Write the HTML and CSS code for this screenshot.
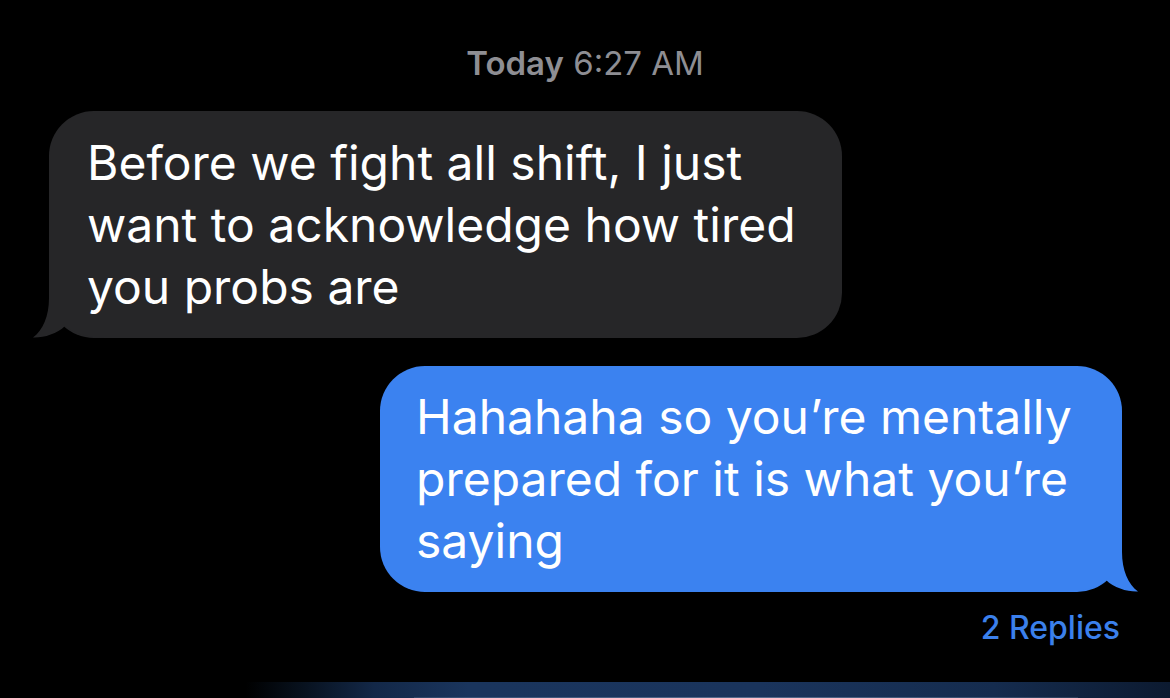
FILE: index.html
```html
<!DOCTYPE html>
<html lang="en">
<head>
  <meta charset="UTF-8" />
  <title>Messages</title>
  <link rel="stylesheet" href="styles.css">
</head>
<body>
  <div class="thread">
    <div class="stamp"><b>Today</b> 6:27 AM</div>

    <div class="row incoming">
      <div class="bubble gray">
        <svg class="tail" viewBox="0 0 80 60" width="80" height="60">
          <path d="M20 0 L20 20 C20 38 14 52 4 59.5 C14 60 28 56 36 48 C44 54 56 60 80 60 L80 0 Z" />
        </svg>
        <span class="text">Before we fight all shift, I just<br>want to acknowledge how tired<br>you probs are</span>
      </div>
    </div>

    <div class="row outgoing">
      <div class="bubble blue">
        <svg class="tail" viewBox="0 0 80 60" width="80" height="60">
          <path d="M20 0 L20 20 C20 38 14 52 4 59.5 C14 60 28 56 36 48 C44 54 56 60 80 60 L80 0 Z" />
        </svg>
        <span class="text">Hahahaha so you’re mentally<br>prepared for it is what you’re<br>saying</span>
      </div>
    </div>

    <div class="replies">2 Replies</div>
  </div>

  <div class="input-glow"></div>
</body>
</html>
```

FILE: styles.css
```css
* {
  box-sizing: border-box;
}

body {
  margin: 0;
  height: 100vh;
  background-color: #000;
  font-family: "Inter", "Noto Sans", sans-serif;
  display: flex;
  flex-direction: column;
  overflow: hidden;
}

.thread {
  display: flex;
  flex-direction: column;
  padding-top: 42px;
}

.stamp {
  text-align: center;
  color: #8e8e93;
  font-size: 33px;
  line-height: 42px;
  margin-bottom: 27px;
}

.stamp b {
  font-weight: 600;
}

.row {
  display: flex;
}

.row.incoming {
  padding-left: 49px;
}

.row.outgoing {
  justify-content: flex-end;
  padding-right: 48px;
  margin-top: 28px;
}

.bubble {
  position: relative;
  color: #fff;
  font-size: 48px;
  line-height: 62px;
  border-radius: 45px;
}

.bubble .text {
  position: relative;
}

.bubble.gray {
  width: 793px;
  background-color: #262628;
  padding: 21px 38px 20px;
}

.bubble.blue {
  width: 742px;
  background-color: #3b82f0;
  padding: 20px 36px 20px;
}

.tail {
  position: absolute;
  bottom: 0;
  display: block;
}

.gray .tail {
  left: -20px;
  fill: #262628;
}

.blue .tail {
  right: -20px;
  fill: #3b82f0;
  transform: scaleX(-1);
}

.replies {
  align-self: flex-end;
  margin-right: 50px;
  margin-top: 17px;
  color: #3b80ec;
  font-size: 32px;
  font-weight: 500;
  line-height: 38px;
}

/* keyboard bar peeking in at the bottom edge */
.input-glow {
  margin-top: auto;
  height: 16px;
  background: linear-gradient(90deg, #000 21%, #08121f 26%, #132848 32%, #1a355d 40%, #1a345c 65%, #152c4e 85%, #0c1a30 100%);
  position: relative;
}

.input-glow::after {
  content: "";
  position: absolute;
  left: 414px;
  right: 92px;
  bottom: 0;
  height: 1px;
  background: linear-gradient(90deg, rgba(140, 160, 190, 0.2), rgba(160, 175, 200, 0.45) 50%, rgba(140, 160, 190, 0.2));
}
```
